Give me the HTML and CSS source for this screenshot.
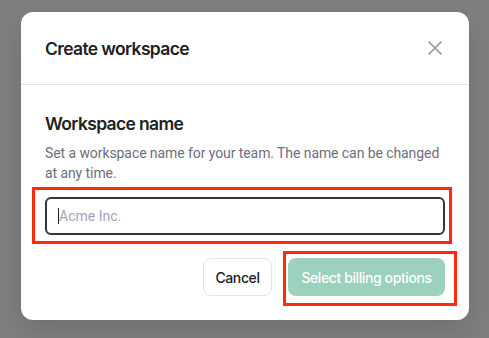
FILE: index.html
```html
<!DOCTYPE html>
<html lang="en">
<head>
<meta charset="utf-8">
<link rel="stylesheet" href="styles.css">
</head>
<body>
<div class="modal">
  <div class="modal-header">
    <h2 class="title">Create workspace</h2>
    <button class="close" aria-label="Close">
      <svg width="14" height="14" viewBox="0 0 14 14"><path d="M1 1L13 13M13 1L1 13" stroke="#8e8ea0" stroke-width="1.5" stroke-linecap="round"/></svg>
    </button>
  </div>
  <div class="modal-body">
    <h3 class="label">Workspace name</h3>
    <p class="desc">Set a workspace name for your team. The name can be changed at any time.</p>
    <div class="field hl-input">
      <div class="input"><span class="caret"></span><span class="placeholder">Acme Inc.</span></div>
    </div>
    <div class="actions">
      <button class="btn btn-cancel">Cancel</button>
      <button class="btn btn-primary hl-btn">Select billing options</button>
    </div>
  </div>
</div>
</body>
</html>
```
FILE: styles.css
```css
html, body { margin: 0; padding: 0; }
body {
  background: #7f7f7f;
  font-family: Inter, "Noto Sans", sans-serif;
  width: 489px;
  height: 338px;
  overflow: hidden;
}
.modal {
  margin: 12px 0 0 21px;
  width: 448px;
  background: #fff;
  border-radius: 12px;
  box-shadow: 0 12px 28px rgba(0,0,0,0.12);
}
.modal-header {
  height: 72px;
  border-bottom: 1px solid #e5e5e5;
  display: flex;
  align-items: center;
  justify-content: space-between;
  padding: 0 24px;
}
.title {
  margin: 0;
  font-size: 17.5px;
  font-weight: 600;
  color: #202123;
  letter-spacing: -0.65px;
}
.close {
  border: 0;
  background: none;
  padding: 0;
  width: 14px;
  height: 14px;
  display: flex;
  margin-right: 3px;
}
.modal-body { padding: 24px 24px 24px; }
.label {
  margin: 0;
  font-size: 17.5px;
  line-height: 28px;
  font-weight: 600;
  color: #202123;
  letter-spacing: -0.65px;
  position: relative;
  top: 1px;
}
.desc {
  margin: 6px 0 0;
  font-family: Roboto, sans-serif;
  font-size: 14px;
  line-height: 20px;
  color: #6e6e80;
  letter-spacing: -0.08px;
}
.field { margin-top: 14px; position: relative; }
.input {
  height: 34px;
  border: 2px solid #353541;
  border-radius: 6px;
  display: flex;
  align-items: center;
  padding-left: 11px;
  font-family: Roboto, sans-serif;
  font-size: 14px;
}
.caret { width: 1px; height: 16px; background: #202123; }
.placeholder { color: #a3a3b8; }
.actions {
  margin-top: 23px;
  display: flex;
  justify-content: flex-end;
  gap: 16px;
}
.btn {
  height: 38px;
  border-radius: 8px;
  font-family: Inter, sans-serif;
  font-size: 14px;
  font-weight: 500;
  letter-spacing: -0.4px;
  padding: 0;
  position: relative;
}
.btn-cancel {
  width: 69px;
  background: #fff;
  border: 1px solid #e3e3e3;
  color: #202123;
}
.btn-primary {
  width: 157px;
  background: #9bd1bd;
  border: 0;
  color: #fff;
}
.hl-input::after, .hl-btn::after {
  content: "";
  position: absolute;
  border: 3px solid #ff2a0a;
  pointer-events: none;
}
.hl-input::after { top: -10px; left: -13px; right: -7px; bottom: -9px; }
.hl-btn::after { top: -7px; left: -5px; right: -12px; bottom: -10px; }
```
